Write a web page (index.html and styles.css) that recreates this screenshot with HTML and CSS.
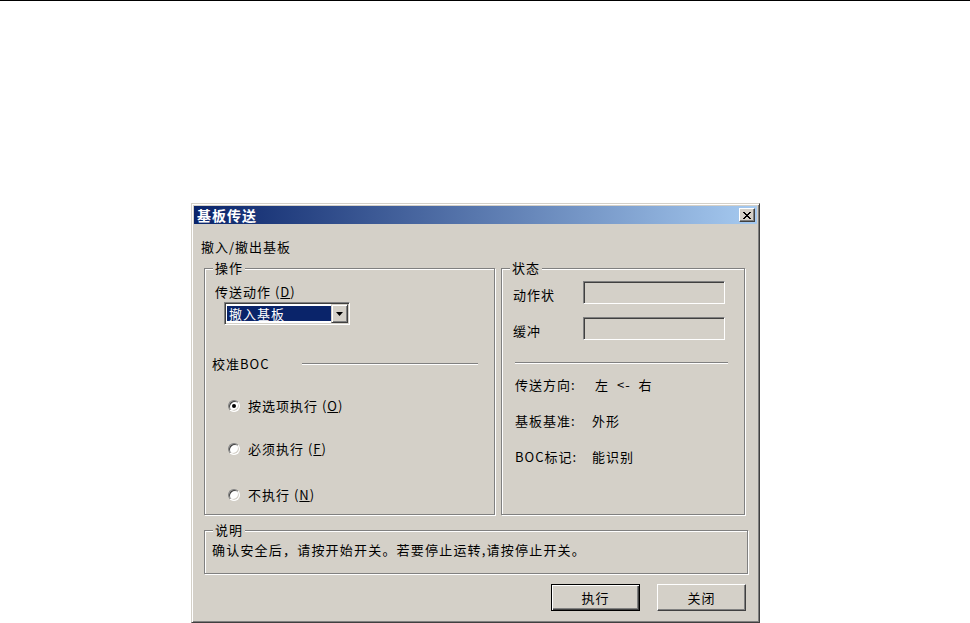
FILE: index.html
```html
<!DOCTYPE html>
<html lang="zh-CN">
<head>
    <meta charset="UTF-8">
    <title>基板传送</title>
    <link rel="stylesheet" href="styles.css">
</head>
<body>
    <div class="topline"></div>

    <div class="dialog">
        <div class="caption">
            <span class="caption-title">基板传送</span>
            <span class="close-btn">
                <svg width="8" height="7" viewBox="0 0 8 7" shape-rendering="crispEdges">
                    <path d="M0 0h2v1h-2z M6 0h2v1h-2z M1 1h2v1h-2z M5 1h2v1h-2z M2 2h4v1h-4z M3 3h2v1h-2z M2 4h4v1h-4z M1 5h2v1h-2z M5 5h2v1h-2z M0 6h2v1h-2z M6 6h2v1h-2z" fill="#000"/>
                </svg>
            </span>
        </div>

        <div class="client">
            <div class="subtitle">撤入/撤出基板</div>

            <div class="groups">
                <!-- 操作 -->
                <div class="group group-op">
                    <span class="group-title">操作</span>
                    <div class="op-label">传送动作 (<u>D</u>)</div>
                    <div class="combo">
                        <span class="combo-value">撤入基板</span>
                        <span class="combo-btn">
                            <svg width="7" height="4" viewBox="0 0 7 4"><polygon points="0,0 7,0 3.5,4" fill="#000"/></svg>
                        </span>
                    </div>
                    <div class="calib">
                        <span>校准BOC</span>
                        <span class="etch"></span>
                    </div>
                    <div class="radios">
                        <div class="radio"><span class="radio-box"><span class="radio-dot"></span></span><span>按选项执行 (<u>O</u>)</span></div>
                        <div class="radio"><span class="radio-box"></span><span>必须执行 (<u>F</u>)</span></div>
                        <div class="radio"><span class="radio-box"></span><span>不执行 (<u>N</u>)</span></div>
                    </div>
                </div>

                <!-- 状态 -->
                <div class="group group-state">
                    <span class="group-title">状态</span>
                    <div class="state-row first">
                        <span class="state-label">动作状</span>
                        <span class="field"></span>
                    </div>
                    <div class="state-row">
                        <span class="state-label">缓冲</span>
                        <span class="field"></span>
                    </div>
                    <div class="etch state-sep"></div>
                    <div class="info">
                        <span>传送方向:</span><span class="dir">左 &lt;- 右</span>
                        <span>基板基准:</span><span>外形</span>
                        <span>BOC标记:</span><span>能识别</span>
                    </div>
                </div>
            </div>

            <!-- 说明 -->
            <div class="group group-note">
                <span class="group-title">说明</span>
                <div class="note-text">确认安全后，请按开始开关。若要停止运转,请按停止开关。</div>
            </div>

            <div class="buttons">
                <span class="btn btn-default">执行</span>
                <span class="btn">关闭</span>
            </div>
        </div>
    </div>
</body>
</html>
```

FILE: styles.css
```css
@charset "utf-8";

*{    box-sizing: border-box;    margin: 0px;    padding: 0px;}

body{
    background: #fff;
    color: #000;
    font-family: "Noto Sans CJK SC", "Noto Sans", sans-serif;
    font-size: 13px;
    letter-spacing: 1px;
    line-height: 16px;
}

.topline{
    height: 1px;
    background: #000;
}

/* ventana clasica */
.dialog{
    width: 569px;
    height: 420px;
    margin: 202px 0 0 191px;
    padding: 2px;
    background: #d4d0c8;
    border: 1px solid;
    border-color: #d4d0c8 #404040 #404040 #d4d0c8;
    box-shadow: inset 1px 1px #fff, inset -1px -1px #808080;
}

.caption{
    height: 18px;
    display: flex;
    align-items: center;
    justify-content: space-between;
    padding: 0 2px 0 3px;
    background: linear-gradient(to right, #0a246a, #a6caf0);
}

.caption-title{
    color: #fff;
    font-weight: bold;
    font-size: 14px;
}

.close-btn{
    width: 16px;
    height: 14px;
    display: flex;
    align-items: center;
    justify-content: center;
    background: #d4d0c8;
    border: 1px solid;
    border-color: #fff #404040 #404040 #fff;
    box-shadow: inset -1px -1px #808080;
}

.subtitle{
    margin: 15px 0 0 7px;
}

.groups{
    display: flex;
    gap: 6px;
    margin: 13px 0 0 10px;
}

/* marco grabado */
.group{
    position: relative;
    border: 1px solid #808080;
    box-shadow: 1px 1px #fff, inset 1px 1px #fff;
}

.group-title{
    position: absolute;
    top: -9px;
    left: 8px;
    padding: 0 2px;
    background: #d4d0c8;
}

.group-op{    width: 291px;    height: 247px;}
.group-state{    width: 244px;    height: 247px;}

.etch{
    display: block;
    height: 2px;
    border-top: 1px solid #808080;
    border-bottom: 1px solid #fff;
}

.op-label{
    margin: 15px 0 0 10px;
}

.combo{
    display: flex;
    width: 126px;
    height: 23px;
    margin: 2px 0 0 19px;
    background: #fff;
    border: 1px solid;
    border-color: #808080 #fff #fff #808080;
    box-shadow: inset 1px 1px #404040, inset -1px -1px #d4d0c8;
    padding: 1px;
}

.combo-value{
    flex: 1;
    margin: 2px 0 2px 1px;
    padding-left: 2px;
    background: #0a246a;
    color: #fff;
    line-height: 15px;
}

.combo-btn{
    width: 17px;
    display: flex;
    align-items: center;
    justify-content: center;
    background: #d4d0c8;
    border: 1px solid;
    border-color: #d4d0c8 #404040 #404040 #d4d0c8;
    box-shadow: inset 1px 1px #fff, inset -1px -1px #808080;
}

.calib{
    display: grid;
    grid-template-columns: 90px 176px;
    align-items: center;
    margin: 31px 0 0 7px;
}

.radios{
    display: flex;
    flex-direction: column;
    gap: 27px;
    margin: 26px 0 0 23px;
}

.radio{
    display: flex;
    align-items: center;
    gap: 8px;
}

.radio:last-child{    margin-top: 3px;}

.radio-box{
    width: 12px;
    height: 12px;
    display: flex;
    align-items: center;
    justify-content: center;
    border-radius: 50%;
    background: #fff;
    border: 1px solid;
    border-color: #808080 #fff #fff #808080;
    box-shadow: inset 1px 1px #404040, inset -1px -1px #d4d0c8;
}

.radio-dot{
    width: 4px;
    height: 4px;
    border-radius: 50%;
    background: #000;
}

.state-row{
    display: flex;
    align-items: flex-start;
    margin: 13px 0 0 11px;
}

.state-row.first{    margin-top: 12px;}

.state-label{
    width: 70px;
    margin-top: 6px;
}

.field{
    width: 142px;
    height: 23px;
    border: 1px solid;
    border-color: #808080 #fff #fff #808080;
    box-shadow: inset 1px 1px #404040, inset -1px -1px #d4d0c8;
}

.state-sep{
    width: 213px;
    margin: 22px 0 0 13px;
}

.info{
    display: grid;
    grid-template-columns: 77px auto;
    row-gap: 20px;
    margin: 13px 0 0 13px;
}

.dir{
    margin-left: 3px;
    word-spacing: 4px;
}

.group-note{
    width: 544px;
    height: 44px;
    margin: 15px 0 0 10px;
}

.note-text{
    margin: 11px 0 0 7px;
    letter-spacing: 1.2px;
}

.buttons{
    display: flex;
    justify-content: flex-end;
    gap: 17px;
    margin: 10px 11px 0 0;
}

.btn{
    width: 89px;
    height: 27px;
    display: flex;
    align-items: center;
    justify-content: center;
    border: 1px solid;
    border-color: #fff #404040 #404040 #fff;
    box-shadow: inset -1px -1px #808080;
}

.btn-default{
    border-color: #000;
    box-shadow: inset 1px 1px #fff, inset -1px -1px #404040, inset -2px -2px #808080;
}
```
